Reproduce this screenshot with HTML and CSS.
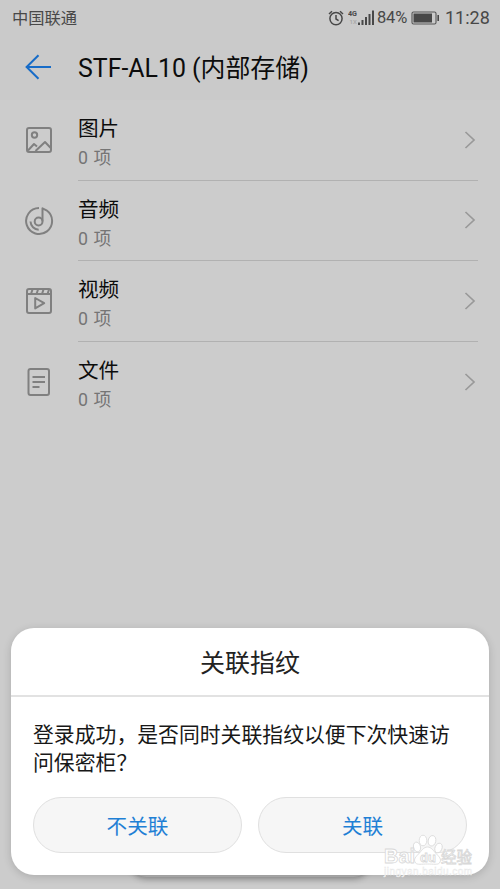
FILE: index.html
```html
<!DOCTYPE html>
<html lang="zh-CN">
  <head>
    <meta charset="UTF-8" />
    <meta name="viewport" content="width=device-width, initial-scale=1.0" />
    <title>保密柜</title>
    <link rel="stylesheet" href="styles.css">
  </head>
  <body>
    <header class="header">
      <div class="status">
        <span class="status__carrier">中国联通</span>
        <svg class="status__alarm" width="16" height="16" viewBox="0 0 16 16">
          <circle cx="8" cy="8.6" r="6.1" />
          <path d="M8 5v4l2.6 1.6M1 4l3-2.8M15 4l-3-2.8" />
        </svg>
        <svg class="status__signal" width="27" height="17" viewBox="0 0 27 17">
          <text x="0" y="7.3" textLength="9" lengthAdjust="spacingAndGlyphs">4G</text>
          <text class="status__faint" x="1.5" y="15">1X</text>
          <path d="M10 13.5h2v2.5h-2zM13.5 11h2v5h-2zM17 8h2v8h-2zM20.5 5h2v11h-2zM24 1.500h2V16h-2z" />
        </svg>
        <span class="status__percent">84%</span>
        <svg class="status__battery" width="29" height="14" viewBox="0 0 29 14">
          <rect x="1" y="1" width="24" height="12" rx="1.5" fill="none" stroke="#555" stroke-width="1.1" />
          <path d="M2.5 2.5h18.5v9h-18.500zM26.4 4h1.6v6h-1.6z" />
        </svg>
        <span class="status__time">11:28</span>
      </div>
      <div class="toolbar">
        <svg class="toolbar__back" width="28" height="28" viewBox="0 0 28 28">
          <path d="M14.5 2.2L2.6 14l11.9 11.8M2.6 14H27" />
        </svg>
        <h1 class="toolbar__title">STF-AL10 (内部存储)</h1>
      </div>
    </header>

    <main class="list">
      <div class="item">
        <svg class="item__icon" viewBox="0 0 30 30">
          <rect x="3" y="3" width="24" height="24" rx="2" />
          <circle cx="10.5" cy="10" r="2.7" />
          <path d="M4 25.500l6-6.500 3 2.500M11.500 26l9.500-9 5.500 5.800" />
        </svg>
        <div class="item__body">
          <div class="item__text">
            <h2 class="item__name">图片</h2>
            <p class="item__count">0 项</p>
          </div>
          <svg class="item__arrow" viewBox="0 0 12 20"><path d="M1.5 2l8.5 8-8.5 8" /></svg>
        </div>
      </div>
      <div class="item">
        <svg class="item__icon" viewBox="0 0 30 30">
          <path d="M15 2a13 13 0 1 0 7.500 2.300L18.500 2.300v13" />
          <circle cx="14.6" cy="15.5" r="3.9" />
          <path d="M6.500 15.500c.2 4.500 3.700 8 8.200 8.200" />
        </svg>
        <div class="item__body">
          <div class="item__text">
            <h2 class="item__name">音频</h2>
            <p class="item__count">0 项</p>
          </div>
          <svg class="item__arrow" viewBox="0 0 12 20"><path d="M1.5 2l8.5 8-8.5 8" /></svg>
        </div>
      </div>
      <div class="item">
        <svg class="item__icon" viewBox="0 0 30 30">
          <rect x="3" y="3" width="24" height="24" rx="2" />
          <path d="M3 8h24M8.500 3.500L7 8M14 3.500L12.500 8M19.500 3.500L18 8M25 3.500L23.500 8M11.200 12v10.400l9-5.200z" />
        </svg>
        <div class="item__body">
          <div class="item__text">
            <h2 class="item__name">视频</h2>
            <p class="item__count">0 项</p>
          </div>
          <svg class="item__arrow" viewBox="0 0 12 20"><path d="M1.5 2l8.5 8-8.5 8" /></svg>
        </div>
      </div>
      <div class="item">
        <svg class="item__icon" viewBox="0 0 30 30">
          <rect x="4.5" y="2" width="20.500" height="26" rx="2" />
          <path d="M8.500 10h12.500M8.500 15h12.500M8.500 20h7" />
        </svg>
        <div class="item__body">
          <div class="item__text">
            <h2 class="item__name">文件</h2>
            <p class="item__count">0 项</p>
          </div>
          <svg class="item__arrow" viewBox="0 0 12 20"><path d="M1.5 2l8.5 8-8.5 8" /></svg>
        </div>
      </div>
    </main>

    <div class="under"></div>
    <section class="dialog">
      <h2 class="dialog__title">关联指纹</h2>
      <p class="dialog__text">登录成功，是否同时关联指纹以便下次快速访问保密柜？</p>
      <div class="dialog__actions">
        <button class="dialog__btn">不关联</button>
        <button class="dialog__btn">关联</button>
      </div>
    </section>

    <svg class="watermark" width="100" height="56" viewBox="0 0 100 56">
      <g class="watermark__paw">
        <ellipse cx="35" cy="15" rx="3.5" ry="5" transform="rotate(-15 35 15)" />
        <ellipse cx="41" cy="8.5" rx="3.8" ry="5.3" />
        <ellipse cx="50" cy="8.8" rx="3.8" ry="5.3" transform="rotate(12 50 8.8)" />
        <ellipse cx="56.5" cy="16" rx="3.5" ry="5" transform="rotate(22 56.5 16)" />
        <path d="M45.500 15c4 0 6 4 9 7 4 4 5 6 3 9-2 2-6 1-12 1s-10 1-12-1c-2-3-1-5 3-9 3-3 5-7 9-7z" />
      </g>
      <text class="watermark__name" x="2" y="31" textLength="31" lengthAdjust="spacingAndGlyphs">Bai</text>
      <text class="watermark__du" x="38" y="30">du</text>
      <text class="watermark__cn" x="59" y="31" textLength="31">经验</text>
      <text class="watermark__url" x="2" y="43" textLength="88">jingyan.baidu.com</text>
    </svg>
  </body>
</html>
```
FILE: styles.css
```css
* {
  box-sizing: border-box;
  padding: 0;
  margin: 0;
}

:root {
  --blue: #1f80d5;
  --blue-shade: #176cc8;
  --page: #cccccc;
  --icon: #808080;
  --line: #b1b1b1;
}
body {
  height: 889px;
  overflow: hidden;
  position: relative;
  background-color: var(--page);
  font-family: Roboto, "Noto Sans CJK SC", sans-serif;
  color: #0c0c0c;
}
h1,
h2 {
  font-weight: normal;
}
svg {
  flex: none;
  fill: none;
}

.header {
  height: 100px;
  background-color: #cacaca;
}
.status {
  display: flex;
  align-items: center;
  height: 35px;
  padding: 0 11px 0 12px;
  color: #484848;
  line-height: 35px;
}
.status__carrier {
  flex: 1;
  padding-top: 1px;
  font-size: 16.3px;
}
.status__alarm {
  stroke: #484848;
  stroke-width: 1.5;
  margin-right: 4px;
}
.status__signal {
  fill: #484848;
  font: bold 7.5px Roboto, sans-serif;
  margin-right: 2px;
}
.status__faint {
  fill: #aaa;
  font-size: 6px;
}
.status__percent {
  width: 30px;
  font-size: 16.5px;
  letter-spacing: -0.2px;
  margin-right: 4px;
}
.status__battery {
  fill: #484848;
  margin-right: 5px;
}
.status__time {
  width: 44px;
  font-size: 18px;
  white-space: nowrap;
}
.toolbar {
  display: flex;
  align-items: center;
  height: 64px;
  padding-left: 24px;
}
.toolbar__back {
  stroke: var(--blue-shade);
  stroke-width: 2;
  margin-right: 26px;
}
.toolbar__title {
  padding-top: 3px;
  font-size: 24.9px;
  line-height: 36px;
}

.item {
  display: flex;
  align-items: center;
  height: 80.6px;
  padding: 0 22px 0 24px;
}
.item__icon {
  width: 30px;
  height: 30px;
  stroke: var(--icon);
  stroke-width: 2;
  stroke-linejoin: round;
  margin-right: 24px;
}
.item__body {
  flex: 1;
  display: flex;
  align-items: center;
  justify-content: space-between;
  height: 100%;
  border-bottom: 1px solid var(--line);
}
.item:last-child .item__body {
  border-bottom-color: transparent;
}
.item__text {
  padding-top: 6px;
}
.item__name {
  font-size: 20.6px;
  line-height: 30px;
}
.item__count {
  font-size: 17.8px;
  line-height: 27px;
  word-spacing: 1px;
  color: #757575;
}
.item__arrow {
  width: 12px;
  height: 20px;
  margin-right: 2px;
  stroke: #999;
  stroke-width: 1.7;
}

/* edge of the page button showing below the dialog */
.under {
  position: absolute;
  left: 131px;
  right: 131px;
  bottom: 12px;
  height: 30px;
  border-radius: 15px;
  background-color: #b4b4b4;
  box-shadow: 0 2px 6px rgba(0, 0, 0, 0.3);
}
.dialog {
  position: absolute;
  left: 11px;
  right: 11px;
  top: 628px;
  height: 247px;
  border-radius: 23px;
  background-color: #fff;
  box-shadow: 0 2px 9px rgba(0, 0, 0, 0.16);
}
.dialog__title {
  height: 69px;
  padding-top: 2px;
  border-bottom: 2px solid #e2e2e2;
  font-size: 25px;
  line-height: 68px;
  text-align: center;
  color: #222;
}
.dialog__text {
  padding: 25px 22px 0;
  font-size: 20.85px;
  line-height: 27.6px;
  color: #181818;
}
.dialog__actions {
  display: flex;
  gap: 16px;
  padding: 20px 22px 0;
}
.dialog__btn {
  flex: 1;
  height: 56px;
  border: 1px solid #e0e0e0;
  border-radius: 28px;
  background-color: #f6f6f6;
  color: var(--blue);
  font: 20.6px Roboto, "Noto Sans CJK SC", sans-serif;
}

.watermark {
  position: absolute;
  left: 382px;
  top: 832px;
  fill: #fff;
  stroke: #d8d8d8;
  stroke-width: 0.8;
}
.watermark text {
  font-family: "Liberation Sans", "Noto Sans CJK SC", sans-serif;
  font-weight: bold;
}
.watermark__name {
  font-size: 20px;
}
.watermark .watermark__du {
  font-size: 13px;
}
.watermark .watermark__cn {
  font-size: 15.5px;
  font-weight: normal;
}
.watermark .watermark__url {
  font-size: 10px;
  font-weight: normal;
  stroke: #e6e6e6;
  stroke-width: 0.4;
}
```
